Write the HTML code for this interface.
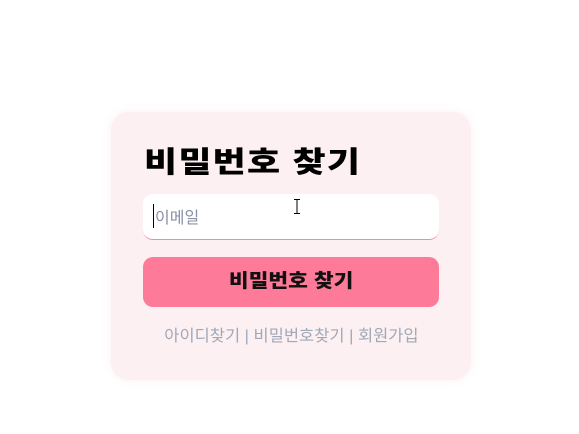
<!DOCTYPE html>
<html><head><meta charset="utf-8"><style>
body{margin:0;width:579px;height:434px;background:#fff;font-family:"Liberation Sans","Noto Sans CJK KR",sans-serif;position:relative;overflow:hidden}
.card{position:absolute;left:111px;top:112px;width:360px;height:268px;background:#fcf0f2;border-radius:18px;box-shadow:0 0 8px rgba(250,200,210,0.3)}
h1{position:absolute;left:33px;top:27px;margin:0;font-size:29px;font-weight:900;color:#000;letter-spacing:1px;transform:scaleX(1.24);transform-origin:left}
.inp{position:absolute;left:32px;top:82px;width:296px;height:46px;background:#fff;border-radius:10px;border-bottom:1.5px solid #f58aa0;box-sizing:border-box}
.inp span{position:absolute;left:10px;top:10px;font-size:16px;color:#8890a8;border-left:1px solid #000;padding-left:1px}
.btn{position:absolute;left:32px;top:145px;width:296px;height:50px;background:#fd7a98;border-radius:10px;text-align:center;line-height:50px;font-size:19px;font-weight:900;color:#111}
.btn b{display:inline-block;transform:scaleX(1.13)}
.links{position:absolute;left:0;width:360px;top:210px;text-align:center;font-size:16px;color:#a0a8b8}
.links span{display:inline-block;transform:scaleX(1.03)}
.cur{position:absolute;left:293px;top:199px;width:8px;height:15px}
</style></head><body>
<div class="card">
<h1>비밀번호 찾기</h1>
<div class="inp"><span>이메일</span></div>
<div class="btn"><b>비밀번호 찾기</b></div>
<div class="links"><span>아이디찾기 | 비밀번호찾기 | 회원가입</span></div>
</div>
<svg class="cur" viewBox="0 0 8 15"><path d="M1 .5h6M4 .5v14M1 14.5h6" stroke="#000" fill="none"/></svg>
</body></html>
